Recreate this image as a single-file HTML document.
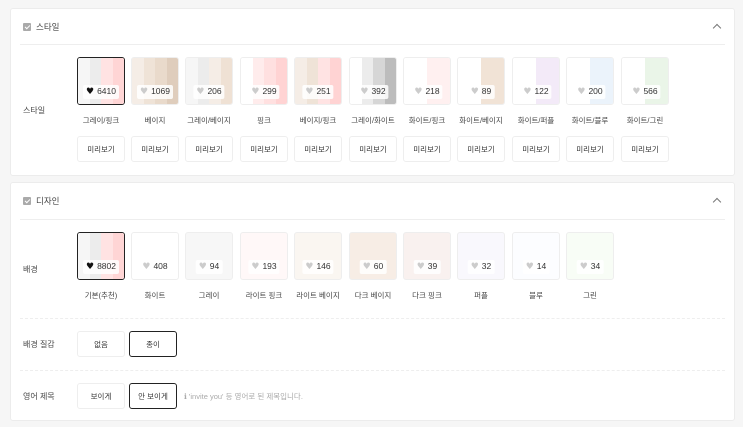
<!DOCTYPE html>
<html><head><meta charset="utf-8"><style>
*{box-sizing:border-box;margin:0;padding:0}
body{width:743px;height:427px;background:#f6f6f6;font-family:"Liberation Sans","Noto Sans CJK KR",sans-serif;position:relative;overflow:hidden;color:#333}
.card{position:absolute;left:10px;width:725px;background:#fff;border:1px solid #ececec;border-radius:3px}
.hd{position:absolute;left:12px;font-size:8.5px;color:#444;display:flex;align-items:center}
.cb{width:8px;height:8px;background:#aaa;border-radius:1px;margin-right:5px;position:relative}
.cb:after{content:"";position:absolute;left:2.5px;top:1px;width:2px;height:4px;border:solid #fff;border-width:0 1px 1px 0;transform:rotate(45deg)}
.chev{position:absolute;right:14px;width:6px;height:6px;border-left:1px solid #777;border-top:1px solid #777;transform:rotate(45deg)}
.line{position:absolute;left:9px;right:9px;height:1px;background:#eee}
.dash{position:absolute;left:9px;right:9px;border-top:1px dashed #eee}
.lbl{position:absolute;left:12px;font-size:8px;color:#444}
.sw{position:absolute;width:48px;height:48px;border:1px solid #eee;border-radius:3px;overflow:hidden;display:flex}
.sw.sel{border:1.5px solid #222}
.sw i{flex:1;display:block}
.bd{position:absolute;left:50%;transform:translateX(-50%);bottom:5px;background:rgba(255,255,255,.85);border-radius:2px;font-size:8.5px;color:#333;padding:1px 3px;white-space:nowrap;line-height:11px}
.bd b{color:#ccc;font-size:9px;margin-right:3px;font-family:"DejaVu Sans",sans-serif}
.sel .bd b{color:#111}
.nm{position:absolute;width:60px;text-align:center;font-size:7.5px;color:#444}
.btn{position:absolute;width:48px;height:26px;border:1px solid #eee;border-radius:3px;font-size:7.5px;color:#333;display:flex;align-items:center;justify-content:center}
.btn.on{border:1.5px solid #222}
</style></head><body>
<div class="card" style="top:8px;height:168px">
<div class="hd" style="top:12px"><span class="cb"></span>스타일</div>
<div class="chev" style="top:16px"></div>
<div class="line" style="top:35px"></div>
<div class="lbl" style="top:96px">스타일</div>
</div>
<div class="card" style="top:182px;height:239px">
<div class="hd" style="top:12px"><span class="cb"></span>디자인</div>
<div class="chev" style="top:16px"></div>
<div class="line" style="top:36px"></div>
<div class="lbl" style="top:81px">배경</div>
<div class="dash" style="top:135px"></div>
<div class="lbl" style="top:156px">배경 질감</div>
<div class="dash" style="top:187px"></div>
<div class="lbl" style="top:208px">영어 제목</div>
</div>

<div class="sw sel" style="left:77px;top:57px"><i style="background:#f6f6f6"></i><i style="background:#ececec"></i><i style="background:#ffe3e3"></i><i style="background:#ffd5d5"></i><span class="bd"><b>♥</b>6410</span></div>
<div class="sw" style="left:131px;top:57px"><i style="background:#f5ede6"></i><i style="background:#efe3d7"></i><i style="background:#e9dacb"></i><i style="background:#dfcdbc"></i><span class="bd"><b>♥</b>1069</span></div>
<div class="sw" style="left:185px;top:57px"><i style="background:#f6f6f6"></i><i style="background:#ececec"></i><i style="background:#f5ede6"></i><i style="background:#efe1d4"></i><span class="bd"><b>♥</b>206</span></div>
<div class="sw" style="left:240px;top:57px"><i style="background:#fff"></i><i style="background:#ffecec"></i><i style="background:#ffe0e0"></i><i style="background:#ffd3d3"></i><span class="bd"><b>♥</b>299</span></div>
<div class="sw" style="left:294px;top:57px"><i style="background:#f5ede6"></i><i style="background:#efe3d7"></i><i style="background:#ffe3e3"></i><i style="background:#ffd3d3"></i><span class="bd"><b>♥</b>251</span></div>
<div class="sw" style="left:349px;top:57px"><i style="background:#fff"></i><i style="background:#ececec"></i><i style="background:#d6d6d6"></i><i style="background:#bcbcbc"></i><span class="bd"><b>♥</b>392</span></div>
<div class="sw" style="left:403px;top:57px"><i style="background:#fff"></i><i style="background:#fff0f0"></i><span class="bd"><b>♥</b>218</span></div>
<div class="sw" style="left:457px;top:57px"><i style="background:#fff"></i><i style="background:#f1e3d6"></i><span class="bd"><b>♥</b>89</span></div>
<div class="sw" style="left:512px;top:57px"><i style="background:#fff"></i><i style="background:#f3eaf8"></i><span class="bd"><b>♥</b>122</span></div>
<div class="sw" style="left:566px;top:57px"><i style="background:#fff"></i><i style="background:#ebf3fb"></i><span class="bd"><b>♥</b>200</span></div>
<div class="sw" style="left:621px;top:57px"><i style="background:#fff"></i><i style="background:#eaf5e8"></i><span class="bd"><b>♥</b>566</span></div>

<div class="nm" style="left:71px;top:115px">그레이/핑크</div>
<div class="nm" style="left:125px;top:115px">베이지</div>
<div class="nm" style="left:179px;top:115px">그레이/베이지</div>
<div class="nm" style="left:234px;top:115px">핑크</div>
<div class="nm" style="left:288px;top:115px">베이지/핑크</div>
<div class="nm" style="left:343px;top:115px">그레이/화이트</div>
<div class="nm" style="left:397px;top:115px">화이트/핑크</div>
<div class="nm" style="left:451px;top:115px">화이트/베이지</div>
<div class="nm" style="left:506px;top:115px">화이트/퍼플</div>
<div class="nm" style="left:560px;top:115px">화이트/블루</div>
<div class="nm" style="left:615px;top:115px">화이트/그린</div>

<div class="btn" style="left:77px;top:136px">미리보기</div>
<div class="btn" style="left:131px;top:136px">미리보기</div>
<div class="btn" style="left:185px;top:136px">미리보기</div>
<div class="btn" style="left:240px;top:136px">미리보기</div>
<div class="btn" style="left:294px;top:136px">미리보기</div>
<div class="btn" style="left:349px;top:136px">미리보기</div>
<div class="btn" style="left:403px;top:136px">미리보기</div>
<div class="btn" style="left:457px;top:136px">미리보기</div>
<div class="btn" style="left:512px;top:136px">미리보기</div>
<div class="btn" style="left:566px;top:136px">미리보기</div>
<div class="btn" style="left:621px;top:136px">미리보기</div>

<div class="sw sel" style="left:77px;top:232px"><i style="background:#f6f6f6"></i><i style="background:#ececec"></i><i style="background:#ffe3e3"></i><i style="background:#ffd5d5"></i><span class="bd"><b>♥</b>8802</span></div>
<div class="sw" style="left:131px;top:232px;background:#fff"><span class="bd"><b>♥</b>408</span></div>
<div class="sw" style="left:185px;top:232px;background:#f7f7f7"><span class="bd"><b>♥</b>94</span></div>
<div class="sw" style="left:240px;top:232px;background:#fff8f8"><span class="bd"><b>♥</b>193</span></div>
<div class="sw" style="left:294px;top:232px;background:#faf6f1"><span class="bd"><b>♥</b>146</span></div>
<div class="sw" style="left:349px;top:232px;background:#f7ede5"><span class="bd"><b>♥</b>60</span></div>
<div class="sw" style="left:403px;top:232px;background:#f9f1ef"><span class="bd"><b>♥</b>39</span></div>
<div class="sw" style="left:457px;top:232px;background:#f9f8fd"><span class="bd"><b>♥</b>32</span></div>
<div class="sw" style="left:512px;top:232px;background:#fcfdff"><span class="bd"><b>♥</b>14</span></div>
<div class="sw" style="left:566px;top:232px;background:#f8fdf6"><span class="bd"><b>♥</b>34</span></div>

<div class="nm" style="left:71px;top:290px">기본(추천)</div>
<div class="nm" style="left:125px;top:290px">화이트</div>
<div class="nm" style="left:179px;top:290px">그레이</div>
<div class="nm" style="left:234px;top:290px">라이트 핑크</div>
<div class="nm" style="left:288px;top:290px">라이트 베이지</div>
<div class="nm" style="left:343px;top:290px">다크 베이지</div>
<div class="nm" style="left:397px;top:290px">다크 핑크</div>
<div class="nm" style="left:451px;top:290px">퍼플</div>
<div class="nm" style="left:506px;top:290px">블루</div>
<div class="nm" style="left:560px;top:290px">그린</div>

<div class="btn" style="left:77px;top:331px">없음</div>
<div class="btn on" style="left:129px;top:331px">종이</div>
<div class="btn" style="left:77px;top:383px">보이게</div>
<div class="btn on" style="left:129px;top:383px">안 보이게</div>
<div style="position:absolute;left:184px;top:391px;font-size:7.5px;color:#aaa">ℹ 'invite you' 등 영어로 된 제목입니다.</div>
</body></html>
